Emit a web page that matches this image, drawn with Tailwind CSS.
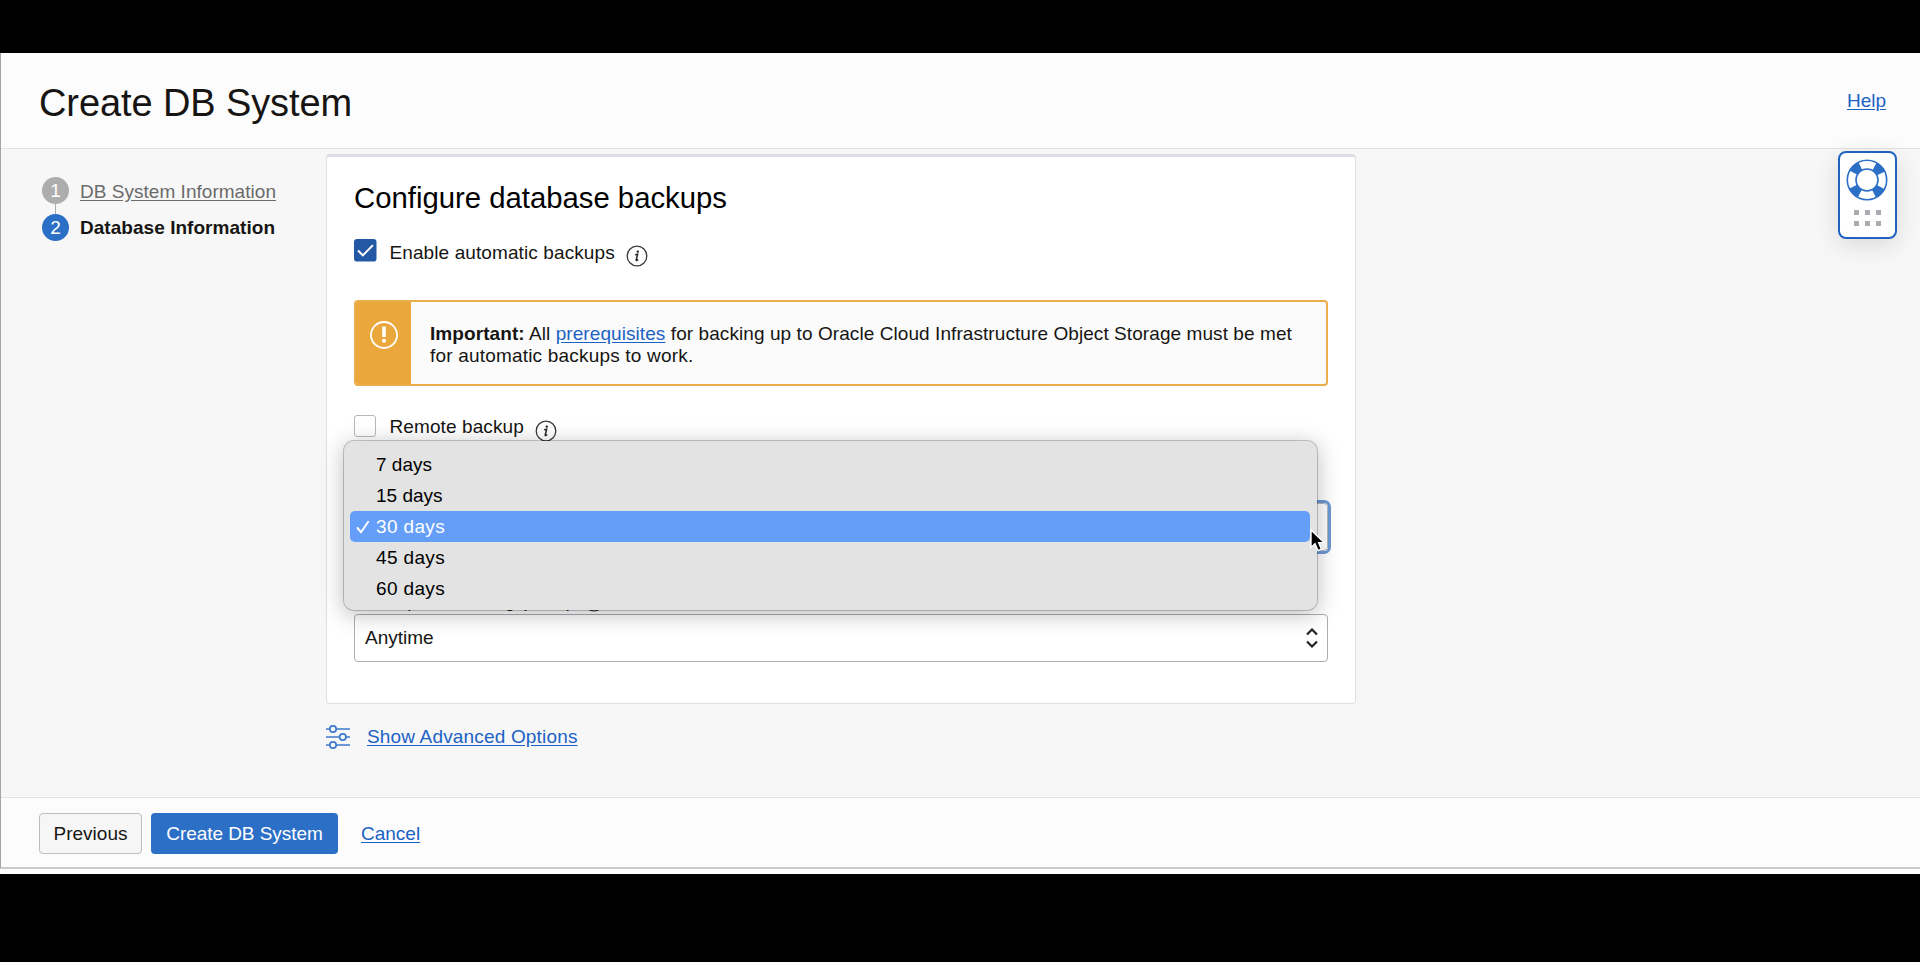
<!DOCTYPE html>
<html lang="en">
<head>
<meta charset="utf-8">
<title>Create DB System</title>
<script src="https://cdn.jsdelivr.net/npm/@tailwindcss/browser@4"></script>
</head>
<body class="h-[962px] w-[1920px] overflow-hidden bg-black pt-[53px] font-['Liberation_Sans',Arial,sans-serif] text-[19px] leading-[22px] text-[#161513]">
<div class="relative flex h-[821px] flex-col bg-white">
  <div class="flex h-[816px] flex-col border-b-2 border-l border-b-[#c8cad0] border-l-[#a5a5a5]">
    <header class="flex h-[96px] shrink-0 items-start justify-between border-b border-[#e2e2e2] bg-[#fcfcfc] pr-[34px] pl-[38px]">
      <h1 class="pt-[28px] text-[38px] leading-[44px] tracking-[-0.1px]">Create DB System</h1>
      <a class="pt-[37px] text-[#1b62c5] underline underline-offset-2">Help</a>
    </header>
    <main class="flex min-h-0 flex-1 bg-[#f7f7f7]">
      <nav class="w-[325px] shrink-0 pt-[28px] pl-[41px]">
        <div class="flex items-center gap-[11px]">
          <span class="flex size-[27px] items-center justify-center rounded-full bg-[#adadad] text-white">1</span>
          <a class="pt-[2px] tracking-[0.03px] text-[#6b6b6b] underline underline-offset-2">DB System Information</a>
        </div>
        <div class="ml-[13px] h-[10px] w-px bg-[#adadad]"></div>
        <div class="flex items-center gap-[11px]">
          <span class="flex size-[27px] items-center justify-center rounded-full bg-[#2c6fc7] text-white">2</span>
          <b class="pt-px tracking-[0.04px]">Database Information</b>
        </div>
      </nav>
      <div class="pt-[5px]">
        <section class="relative h-[550px] w-[1030px] rounded-[4px] border border-t-3 border-[#dcdfe3] bg-white px-[27px] pt-[23px]">
          <h2 class="text-[29.3px] leading-[36px] text-black">Configure database backups</h2>
          <div class="mt-[23px] flex h-[30px] items-start">
            <svg class="size-[22.5px]" viewBox="0 0 22 22"><rect width="22" height="22" rx="3" fill="#2359a4"/><path d="M4 11.2 8.6 16 18.5 6" fill="none" stroke="#fff" stroke-width="2"/></svg>
            <span class="mt-[2.5px] ml-[13px] tracking-[0.1px]">Enable automatic backups</span>
            <svg class="mt-[6px] ml-[11px] size-[22px]" viewBox="0 0 22 22"><circle cx="11" cy="11" r="9.8" fill="none" stroke="#3a3a3a" stroke-width="1.3"/><circle cx="11.8" cy="6.6" r="1.2" fill="#222"/><path d="M9.2 9.8 11.6 9.3 10.2 15.2Q10.2 16 12.2 14.6" fill="none" stroke="#222" stroke-width="1.5"/></svg>
          </div>
          <div class="mt-[31px] flex h-[86px] w-[974px] overflow-hidden rounded-[4px] border-2 border-[#ecae4c] bg-[#fbfbfb]">
            <div class="flex w-[55px] shrink-0 justify-center bg-[#eaa83c] pt-[19px]">
              <svg class="size-[28px]" viewBox="0 0 28 28"><circle cx="14" cy="14" r="13" fill="none" stroke="#fff" stroke-width="1.8"/><path d="M14 5.5V16M14 18v3.5" stroke="#fff" stroke-width="3.6"/></svg>
            </div>
            <p class="pt-[21px] pl-[19px] whitespace-nowrap"><span class="tracking-[0.075px]"><b>Important:</b> All <a class="text-[#1b62c5] underline underline-offset-2">prerequisites</a> for backing up to Oracle Cloud Infrastructure Object Storage must be met</span><br><span class="tracking-[0.19px]">for automatic backups to work.</span></p>
          </div>
          <div class="mt-[29px] flex h-[30px] items-start">
            <span class="size-[22px] rounded-[3px] border-[1.5px] border-[#b4b8be]"></span>
            <span class="mt-[1px] ml-[13.5px] tracking-[0.1px]">Remote backup</span>
            <svg class="mt-[4.5px] ml-[11.5px] size-[22px]" viewBox="0 0 22 22"><circle cx="11" cy="11" r="9.8" fill="none" stroke="#3a3a3a" stroke-width="1.3"/><circle cx="11.8" cy="6.6" r="1.2" fill="#222"/><path d="M9.2 9.8 11.6 9.3 10.2 15.2Q10.2 16 12.2 14.6" fill="none" stroke="#222" stroke-width="1.5"/></svg>
          </div>
          <div class="mt-[58px] h-[48px] w-[974px] rounded-[4px] border border-[#b4b8be] ring-[3px] ring-[#6c99d6]"></div>
          <div class="mt-[39px] flex h-[24px] items-start">
            <span class="tracking-[0.1px]">Backup scheduling (UTC)</span>
            <svg class="ml-[10px] size-[22px]" viewBox="0 0 22 22"><circle cx="11" cy="11" r="9.8" fill="none" stroke="#3a3a3a" stroke-width="1.3"/></svg>
          </div>
          <div class="flex h-[48px] w-[974px] items-center justify-between rounded-[4px] border-[1.5px] border-[#a9aeb5] pr-[8px] pl-[10px]">
            <span>Anytime</span>
            <svg class="h-[22px] w-[14px]" viewBox="0 0 14 22"><path d="M2 7.5 7 2.5l5 5M2 14.5l5 5 5-5" fill="none" stroke="#222" stroke-width="2.2"/></svg>
          </div>
          <ul class="absolute top-[283px] left-[16px] h-[171px] w-[975px] rounded-[11px] border border-black/20 bg-[#e3e3e3] bg-clip-padding pt-[8px] pr-[7px] pl-[6px] text-black shadow-[0_4px_22px_rgba(0,0,0,0.25)]">
            <li class="h-[31px] pl-[26px] leading-[31px]">7 days</li>
            <li class="h-[31px] pl-[26px] leading-[31px]">15 days</li>
            <li class="flex h-[31px] items-center rounded-[5px] bg-[#649ef8] pl-[6px] leading-[31px] text-white"><svg class="mr-[6px] size-[14px]" viewBox="0 0 14 14"><path d="M1.5 8 5 12.2 12.2 1.8" fill="none" stroke="#fff" stroke-width="2" stroke-linecap="round"/></svg><span class="tracking-[0.35px]">30 days</span></li>
            <li class="h-[31px] pl-[26px] leading-[31px] tracking-[0.35px]">45 days</li>
            <li class="h-[31px] pl-[26px] leading-[31px] tracking-[0.35px]">60 days</li>
          </ul>
          <svg class="absolute top-[371px] left-[982px] h-[26px] w-[18px]" viewBox="0 0 18 26"><path d="M2 2V19.5L6 15.8 9 22.6 12.4 21.2 9.6 14.6H15Z" fill="#000" stroke="#fff" stroke-width="1.4"/></svg>
        </section>
        <div class="mt-[20px] flex items-center gap-[17px]">
          <svg class="h-[26px] w-[24px]" viewBox="0 0 24 26" fill="none" stroke="#3d7bd0" stroke-width="1.7"><path d="M0 5H4M10 5H24M0 13H13.5M20 13H24M0 21H4M10 21H24"/><circle cx="7" cy="5" r="3.2"/><circle cx="16.8" cy="13" r="3.2"/><circle cx="7" cy="21" r="3.2"/></svg>
          <a class="-mt-px tracking-[0.17px] text-[#1b62c5] underline underline-offset-2">Show Advanced Options</a>
        </div>
      </div>
    </main>
    <footer class="flex h-[70px] shrink-0 items-start border-t border-[#e2e2e2] bg-[#fcfcfc] pt-[15px] pl-[38px] leading-[38px]">
      <button class="h-[41px] w-[103px] rounded-[4px] border-[1.5px] border-[#b9bec5] bg-[#f6f6f6]">Previous</button>
      <button class="ml-[9px] h-[41px] w-[187px] rounded-[4px] bg-[#2c6fc7] tracking-[-0.05px] text-white">Create DB System</button>
      <a class="ml-[23px] leading-[41px] text-[#1b62c5] underline underline-offset-2">Cancel</a>
    </footer>
  </div>
  <aside class="absolute top-[98px] left-[1837.5px] flex h-[88px] w-[59.5px] flex-col items-center rounded-[8px] border-[2.5px] border-[#1f63bf] bg-white pt-[6px] shadow-[0_6px_24px_rgba(0,0,0,0.12)]">
    <svg class="size-[42px]" viewBox="0 0 42 42" fill="none"><circle cx="21" cy="21" r="15.5" stroke="#2c6fc7" stroke-width="9" stroke-dasharray="9.6 14.75" stroke-dashoffset="-7.37"/><circle cx="21" cy="21" r="19.7" stroke="#2c6fc7" stroke-width="1.6"/><circle cx="21" cy="21" r="11" stroke="#2c6fc7" stroke-width="1.6"/></svg>
    <svg class="mt-[8.5px] h-[17px] w-[27px]" viewBox="0 0 27 17" fill="#a9adb2"><path d="M0 0h5v5H0zM11 0h5v5H11zM22 0h5v5H22zM0 11h5v5H0zM11 11h5v5H11zM22 11h5v5H22z"/></svg>
  </aside>
</div>
</body>
</html>
